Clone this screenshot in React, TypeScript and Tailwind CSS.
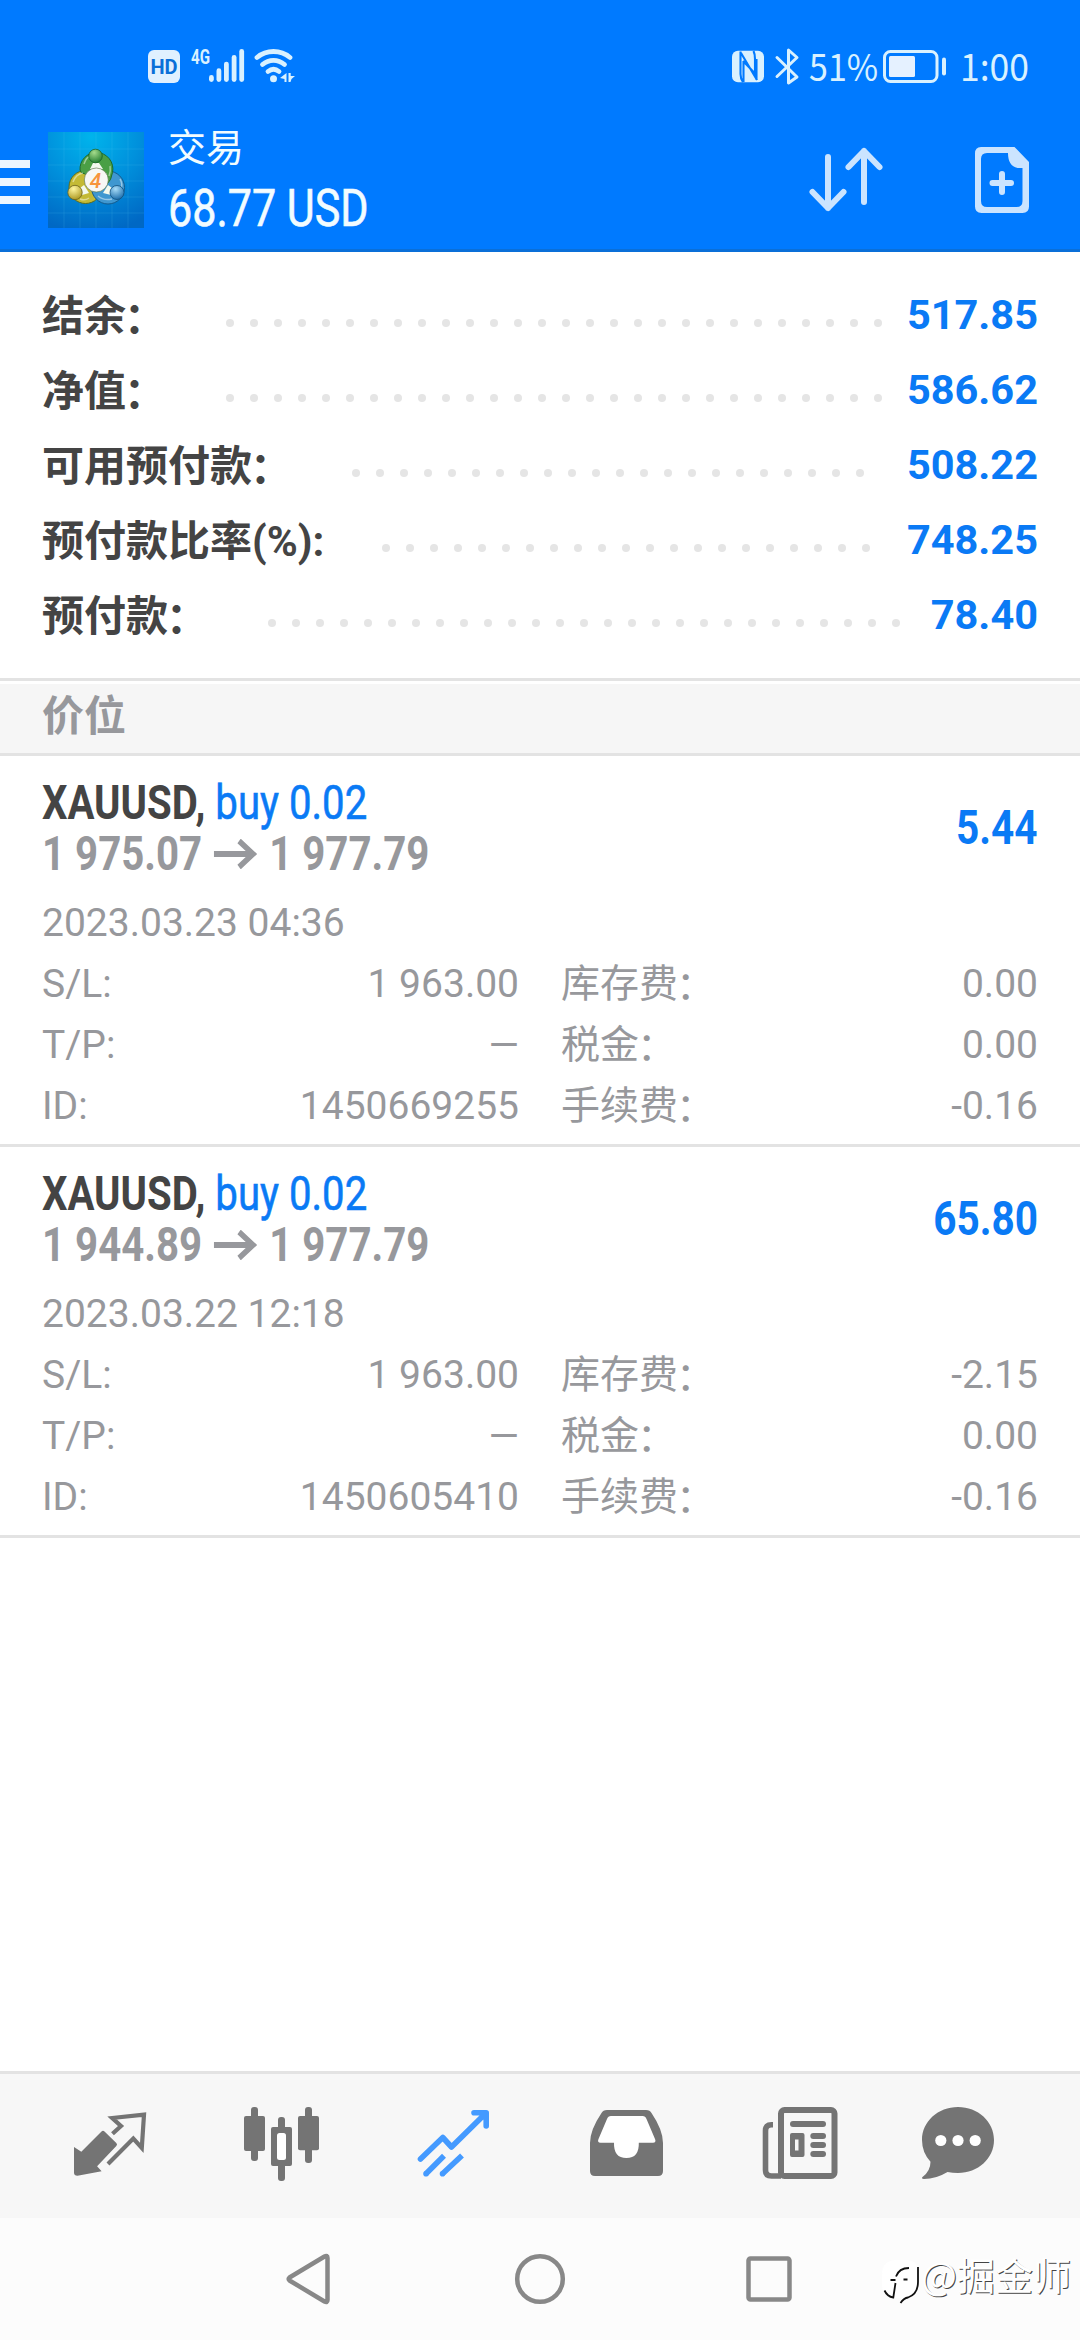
import { ReactNode } from "react";

const summary = [
  { label: "结余：", value: "517.85", dots: 28 },
  { label: "净值：", value: "586.62", dots: 28 },
  { label: "可用预付款：", value: "508.22", dots: 22 },
  { label: "预付款比率(%):", value: "748.25", dots: 21 },
  { label: "预付款：", value: "78.40", dots: 27 },
];

const positions = [
  {
    open: "1 975.07",
    current: "1 977.79",
    profit: "5.44",
    time: "2023.03.23 04:36",
    id: "1450669255",
    swap: "0.00",
  },
  {
    open: "1 944.89",
    current: "1 977.79",
    profit: "65.80",
    time: "2023.03.22 12:18",
    id: "1450605410",
    swap: "-2.15",
  },
];

function StatusBar() {
  return (
    <div className="flex h-[116px] items-start pt-[46px] text-[#d9f1ff]">
      <div className="ml-[148px] flex items-start">
        <div className="mt-[4px] flex h-[33px] w-8 items-center justify-center rounded-[6px] bg-[#e0f0ff] font-[Roboto] text-[20px] font-bold text-[#0a6fd8]">
          HD
        </div>
        <span className="mt-[1px] ml-[11px] inline-block w-[18px] origin-left scale-x-[0.72] font-[Roboto] text-[21px] leading-[21px] font-bold">
          4G
        </span>
        <svg className="h-[40px] w-[90px]" viewBox="209 46 90 40" fill="currentColor">
          <rect x="209" y="75" width="4.8" height="7" rx="2.4" />
          <rect x="216.5" y="68.3" width="4.8" height="13.7" rx="2.4" />
          <rect x="224" y="61.7" width="4.8" height="20.3" rx="2.4" />
          <rect x="231.7" y="55" width="4.8" height="27" rx="2.4" />
          <rect x="239.3" y="49" width="4.8" height="33" rx="2.4" />
          <g fill="none" stroke="currentColor" strokeWidth="4.8" strokeLinecap="round">
            <path d="M257 57.5C266.5 49.5 280.5 49.5 290 57.5" />
            <path d="M262.5 64.5C269 59 278 59 284.5 64.5" />
            <path d="M268 71.5C271.5 68.6 275.5 68.6 279 71.5" />
          </g>
          <circle cx="273.5" cy="78.8" r="3.5" />
          <path d="M286.5 73v9h-2v-3l-4.5-1zM288.5 73h2.2v3h4.3l-3.5 3-1 3h-2z" />
        </svg>
      </div>
      <div className="ml-auto mr-[51px] flex items-start">
        <svg className="h-[40px] w-[72px]" viewBox="732 46 72 40">
          <rect x="732" y="50.7" width="32" height="31.6" rx="6" fill="currentColor" />
          <path
            d="M740.5 51.5V74c0 3.5 1 6 2.5 8M743.5 61v21M743 61l12 12.5V59c0-3.5-.5-6-1.5-8M741 53l16 27M756.5 80V59"
            fill="none"
            stroke="#007aff"
            strokeWidth="2.1"
          />
          <path
            d="M777 57.5l20 19.5-8.5 6V50l8.5 7.5L777 76.5"
            fill="none"
            stroke="currentColor"
            strokeWidth="3"
            strokeLinejoin="round"
            strokeLinecap="round"
          />
        </svg>
        <span className="-mt-[3px] ml-[5px] inline-block w-[66px] origin-left scale-x-[0.92] font-['Noto_Sans_CJK_SC',sans-serif] text-[37px] leading-[44px]">
          51%
        </span>
        <svg className="ml-[7px] h-[40px] w-[66px]" viewBox="882 46 66 40">
          <rect x="884.5" y="51.5" width="52.5" height="30" rx="6" fill="none" stroke="currentColor" strokeWidth="3" />
          <rect x="889" y="56" width="26" height="21" rx="1.5" fill="#e5f1ff" />
          <rect x="942" y="57.5" width="4" height="18" rx="2" fill="currentColor" />
        </svg>
        <span className="-mt-[3px] ml-[12px] inline-block w-[69px] origin-left scale-x-[0.96] font-['Noto_Sans_CJK_SC',sans-serif] text-[37px] leading-[44px]">
          1:00
        </span>
      </div>
    </div>
  );
}

function AppLogo() {
  return (
    <svg className="ml-[18px] mt-[16px] h-24 w-24" viewBox="0 0 96 96">
      <defs>
        <radialGradient id="logoBg" cx="0.45" cy="0.05" r="1">
          <stop offset="0" stopColor="#00b4ec" />
          <stop offset="0.5" stopColor="#0090dc" />
          <stop offset="1" stopColor="#0068c4" />
        </radialGradient>
        <radialGradient id="green" cx="0.4" cy="0.25" r="0.8">
          <stop offset="0" stopColor="#a5dc8c" />
          <stop offset="1" stopColor="#1f7a2c" />
        </radialGradient>
        <radialGradient id="yellow" cx="0.4" cy="0.25" r="0.8">
          <stop offset="0" stopColor="#fff6a0" />
          <stop offset="1" stopColor="#a8941c" />
        </radialGradient>
        <radialGradient id="blue" cx="0.4" cy="0.25" r="0.8">
          <stop offset="0" stopColor="#a8dcf8" />
          <stop offset="1" stopColor="#1769a8" />
        </radialGradient>
      </defs>
      <rect width="96" height="96" fill="url(#logoBg)" />
      <path
        d="M0 17h96M0 33h96M0 49h96M0 65h96M0 81h96M16 0v96M32 0v96M48 0v96M64 0v96M80 0v96"
        stroke="#5cc4f2"
        strokeOpacity="0.16"
      />
      <circle cx="37.5" cy="55" r="16.5" fill="#c4ba35" stroke="#5e6b1c" />
      <circle cx="60" cy="55.5" r="16.5" fill="#3f97d0" stroke="#135a8c" />
      <path d="M48.5 20.5a16.5 16.5 0 0 1 16 20q-1 8-6 12L37 42q-5-1-5-4a16.5 16.5 0 0 1 16.5-17.5z" fill="#4a9f45" stroke="#1f6b2a" />
      <path d="M25 50q3-8 10-9M36 32q2-7 8-9M62 34q1 5-1 10M72 47q3 5 1 10M50 64q6 5 14 3M32 67q5 2 9-1" fill="none" stroke="#fff" strokeOpacity="0.45" strokeWidth="1.5" />
      <path d="M42 37l3-6h6l4 6zM32 56l4-3 5 8-7 2zM64 56l-4-3-5 8 8 2z" fill="#f3f9ee" />
      <circle cx="47.5" cy="24" r="6.8" fill="url(#green)" stroke="#1b6428" strokeWidth="0.8" />
      <circle cx="27" cy="60.5" r="7.2" fill="url(#yellow)" stroke="#6b611a" strokeWidth="0.8" />
      <circle cx="69" cy="60.5" r="7" fill="url(#blue)" stroke="#12507e" strokeWidth="0.8" />
      <circle cx="48.3" cy="48" r="12" fill="#f7f7f5" stroke="#4d6a3a" strokeWidth="0.6" />
      <text x="47.5" y="55.5" textAnchor="middle" fontFamily="Roboto" fontSize="21" fontStyle="italic" fontWeight="500" fill="#f7943c">
        4
      </text>
    </svg>
  );
}

function Header() {
  return (
    <header className="h-[252px] border-b-[3px] border-[#0a6fd8] bg-[#007aff]">
      <StatusBar />
      <div className="flex items-start">
        <div className="mt-[44px] flex w-[30px] flex-col gap-[10px]">
          <div className="h-2 bg-[#ecf6ff]" />
          <div className="h-2 bg-[#ecf6ff]" />
          <div className="h-2 bg-[#ecf6ff]" />
        </div>
        <AppLogo />
        <div className="ml-[24px] pt-[6px] text-[#f2fcff]">
          <div className="font-['Noto_Sans_CJK_SC',sans-serif] text-[38px] leading-[46px]">交易</div>
          <div className="mt-[11px] w-[200px] origin-left scale-x-[0.828] font-[Roboto] text-[52px] leading-[60px] whitespace-nowrap [-webkit-text-stroke:0.6px]">
            68.77 USD
          </div>
        </div>
        <svg className="mt-[24px] ml-auto h-[80px] w-[80px]" viewBox="806 140 80 80" fill="none" stroke="#cbe4ff" strokeWidth="6" strokeLinecap="round" strokeLinejoin="round">
          <path d="M828 157v51M812.5 192l15.5 16 15.5-16" />
          <path d="M864 202v-51M848.5 167l15.5-16 15.5 16" />
        </svg>
        <svg className="mt-[24px] mr-[34px] ml-[80px] h-[80px] w-[80px]" viewBox="966 140 80 80">
          <path
            d="M981 147h33.5l14.5 15v44.5q0 6.5-6.5 6.5h-41q-6.5 0-6.5-6.5v-53q0-6.5 6-6.5z M987 153q-6 0-6 6v42q0 6 6 6h29.5q6 0 6-6v-33h-5q-9.5-2-9.5-15z"
            fill="#cbe4ff"
            fillRule="evenodd"
          />
          <path d="M1002 174v18M992.5 183h18.5" stroke="#cbe4ff" strokeWidth="6" strokeLinecap="round" />
        </svg>
      </div>
    </header>
  );
}

// Full-width colons sit closer to the text and slightly lower than the font places them
function Label({ text }: { text: string }) {
  if (!text.endsWith("：")) return <span>{text}</span>;

  return (
    <span>
      {text.slice(0, -1)}
      <span className="relative top-[2px] -left-[2px]">：</span>
    </span>
  );
}

function SummaryRow({ label, value, dots }: { label: string; value: string; dots: number }) {
  return (
    <div className="flex h-[75px] items-center">
      <div className="mt-[2px] font-[Roboto,'Noto_Sans_CJK_SC',sans-serif] text-[42px] font-bold whitespace-nowrap text-[#444]">
        <Label text={label} />
      </div>
      <div className="mt-[15px] ml-[50px] flex">
        {Array.from({ length: dots }, (_, i) => (
          <i key={i} className="mx-2 h-2 w-2 rounded-full bg-[#e5e5e5]" />
        ))}
      </div>
      <span className="ml-auto font-[Roboto] text-[41.5px] font-bold text-[#0a7af5]">{value}</span>
    </div>
  );
}

function Detail({ label, value }: { label: string; value: string }) {
  return (
    <div className="flex h-[61px] items-center justify-between">
      <Label text={label} />
      <span>{value}</span>
    </div>
  );
}

function Position({ position }: { position: (typeof positions)[number] }) {
  return (
    <section className="h-[391px] border-b-[3px] border-[#e3e3e3] px-[42px] pt-[21px]">
      <div className="flex items-center justify-between">
        <div className="font-[Roboto] text-[48px] leading-[51px] whitespace-nowrap">
          <div className="origin-left scale-x-[0.836]">
            <span className="font-bold text-[#444]">XAUUSD,</span>{" "}
            <span className="text-[#0a7af5] [-webkit-text-stroke:0.6px]">buy 0.02</span>
          </div>
          <div className="flex origin-left scale-x-[0.838] items-center font-bold text-[#97989c]">
            {position.open}
            <svg className="mx-[14px] h-[30px] w-[52px]" viewBox="0 0 50 30" preserveAspectRatio="none" fill="none" stroke="currentColor" strokeWidth="6">
              <path d="M0 15h46M29 2l16 13-16 13" />
            </svg>
            {position.current}
          </div>
        </div>
        <span className="origin-right scale-x-[0.845] font-[Roboto] text-[48px] font-bold text-[#0a7af5]">
          {position.profit}
        </span>
      </div>
      <div className="font-[Roboto,'Noto_Sans_CJK_SC',sans-serif] text-[39px] text-[#97989c]">
        <div className="mt-[14px] leading-[61px]">{position.time}</div>
        <div className="grid grid-cols-2 gap-x-[42px]">
          <Detail label="S/L:" value="1 963.00" />
          <Detail label="库存费：" value={position.swap} />
          <Detail label="T/P:" value="—" />
          <Detail label="税金：" value="0.00" />
          <Detail label="ID:" value={position.id} />
          <Detail label="手续费：" value="-0.16" />
        </div>
      </div>
    </section>
  );
}

function TabIcon({ children, active }: { children: ReactNode; active?: boolean }) {
  return (
    <div className={active ? "flex w-[172px] justify-center text-[#449aff]" : "flex w-[172px] justify-center text-[#747474]"}>
      <svg className="h-24 w-24" viewBox="0 0 96 96" fill="currentColor">
        {children}
      </svg>
    </div>
  );
}

function TabBar() {
  return (
    <nav className="flex h-[147px] items-center border-t-[3px] border-[#e3e3e3] bg-[#f7f7f7] px-[24px]">
      <TabIcon>
        <path d="M12 49l7.3 4.7L39.5 33.5q1.5-1.5 3 0L54.3 45q1.5 1.5 0 3L35.1 68.3l4.5 5L15.5 77.7q-3.5 0-3.5-3z" />
        <path
          d="M50.5 35.8l8.5-7.8-8.8-8L82 16.7 79.8 50l-8.5-9.5L46 66"
          fill="none"
          stroke="currentColor"
          strokeWidth="4.2"
        />
      </TabIcon>
      <TabIcon>
        <rect x="17" y="9" width="7" height="54" rx="3" />
        <rect x="10" y="18" width="21" height="35" rx="2" />
        <rect x="44" y="19" width="7" height="64" rx="3" />
        <rect x="37" y="29" width="21" height="39" rx="2" />
        <rect x="43" y="35" width="9" height="27" rx="2.5" fill="#fff" />
        <rect x="71" y="9" width="7" height="56" rx="3" />
        <rect x="64" y="18" width="21" height="34.3" rx="2" />
      </TabIcon>
      <TabIcon active>
        <g fill="none" stroke="currentColor" strokeWidth="5.6" strokeLinejoin="round">
          <path d="M14.5 61l22.3-21.5 8.7 9.5L80 15M68 14.8h12.2V28" strokeLinecap="round" />
          <path d="M20 75.7l18-18M36.5 75.7L56 57.5" />
          <path d="M20 75.7h.01M36.5 75.7h.01" strokeLinecap="round" />
        </g>
      </TabIcon>
      <TabIcon>
        <path d="M29 12h39q4 0 5.5 3Q85 32 85 45v28q0 5-5 5H17q-5 0-5-5V45q0-13 11.5-30 1.5-3 5.5-3z" />
        <path d="M33 18h31.5q3 0 4 3l8.5 20q1.5 3.7-2 3.7H60.8q.5 15.3-12.4 15.3T36 44.7H22.5q-3.5 0-2-3.7L29 21q1-3 4-3z" fill="#fff" />
      </TabIcon>
      <TabIcon>
        <g fill="none" stroke="currentColor">
          <rect x="31" y="12" width="53.5" height="66" rx="3.5" strokeWidth="6" />
          <path d="M23 26.8h-1.5q-6 0-6 6V72q0 6 6 6H31" strokeWidth="5.6" />
        </g>
        <rect x="40" y="23" width="36" height="6" rx="3" />
        <path d="M42 35h10.5q2 0 2 2v20q0 2-2 2H42q-2 0-2-2V37q0-2 2-2zM45 41.5v11h3.5v-11z" fillRule="evenodd" />
        <rect x="60.3" y="35" width="15.7" height="6" rx="3" />
        <rect x="60.3" y="44" width="15.7" height="6" rx="3" />
        <rect x="60.3" y="53" width="15.7" height="6" rx="3" />
      </TabIcon>
      <TabIcon>
        <path d="M36 9c20 0 36 14.5 36 33S56 75 36 75q-5.5 0-10.5-1Q14 81 2 81q-3 0-1.5-2Q8.5 73 8.5 63.7 0 54.5 0 42C0 23.5 16 9 36 9z" />
        <circle cx="18.8" cy="42.5" r="5.6" fill="#fff" />
        <circle cx="36" cy="42.5" r="5.6" fill="#fff" />
        <circle cx="53.2" cy="42.5" r="5.6" fill="#fff" />
      </TabIcon>
    </nav>
  );
}

function SystemNav() {
  return (
    <div className="relative flex h-[122px] items-center bg-[#fcfcfc]">
      <svg className="ml-[280px] h-[60px] w-[520px]" viewBox="280 2249 520 60" fill="none" stroke="#888" strokeWidth="4.5" strokeLinejoin="round">
        <path d="M289.5 2277.5L324.5 2256.5q3-1.5 3 1.5v42q0 3-3 1.5L289.5 2280.5q-1.5-1.5 0-3z" />
        <circle cx="540" cy="2279" r="22.8" />
        <rect x="748.5" y="2258.5" width="41" height="41" rx="2" />
      </svg>
      <div className="absolute top-[34px] right-[9px] flex items-center">
        <svg className="mt-[3px] h-[50px] w-[40px]" viewBox="876 2255 40 50">
          <path d="M892 2260h8q14 0 14 13v10q0 14-10 15l-8 5v-5h-4q-15 0-15-14v-10q0-14 15-14z" fill="#fff" />
          <g fill="none" stroke="#111" strokeWidth="1.8">
            <path d="M885.5 2280h5M891 2276.5q3-8.5 13-8.5M898.5 2279.5h4" />
            <path d="M890.5 2283l-2.2 14.5q-6-1-8.8-7" />
            <path d="M913 2267v15q0 12-10 15.5-4 .5-7.5 5.5" />
          </g>
        </svg>
        <span className="-mt-[9px] font-['Noto_Sans_CJK_SC',sans-serif] text-[38px] leading-[50px] text-white [text-shadow:1px_1px_0_#444]">
          @掘金师
        </span>
      </div>
    </div>
  );
}

export default function App() {
  return (
    <div lang="zh-CN" className="flex h-[2340px] w-[1080px] flex-col overflow-hidden bg-white">
      <Header />
      <div className="px-[42px] pt-[26px] pb-[25px]">
        {summary.map((row) => (
          <SummaryRow key={row.label} {...row} />
        ))}
      </div>
      <div className="mb-[3px] h-[3px] bg-[#e3e3e3]" />
      <div className="h-[72px] border-b-[3px] border-[#e3e3e3] bg-[#f6f6f6] px-[42px] font-['Noto_Sans_CJK_SC',sans-serif] text-[42px] leading-[57px] font-bold text-[#97989c]">
        价位
      </div>
      {positions.map((position) => (
        <Position key={position.id} position={position} />
      ))}
      <div className="flex-1" />
      <TabBar />
      <SystemNav />
    </div>
  );
}
